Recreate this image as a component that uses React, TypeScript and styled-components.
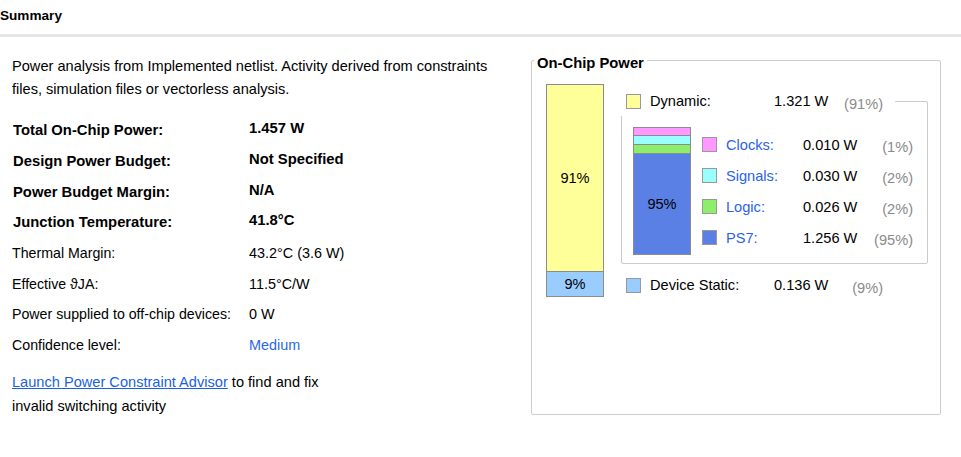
import React from "react";
import styled, { createGlobalStyle } from "styled-components";

const GlobalStyle = createGlobalStyle`
  html, body { margin: 0; padding: 0; background: #ffffff; }
  body {
    font-family: "Liberation Sans", Arial, sans-serif;
    font-size: 14.6px;
    color: #000000;
  }
  * { box-sizing: border-box; }
`;

const Page = styled.div`
  width: 961px;
  height: 457px;
  background: #fff;
`;

const Header = styled.div`
  height: 37px;
  padding-bottom: 4px;
  border-bottom: 3px solid #e6e6e6;
  display: flex;
  align-items: center;
  font-weight: bold;
  font-size: 13.6px;
`;

const Main = styled.div`
  display: flex;
  align-items: flex-start;
`;

const LeftColumn = styled.div`
  width: 531px;
  padding: 18px 0 0 12px;
  display: flex;
  flex-direction: column;
`;

const Intro = styled.p`
  margin: 0;
  line-height: 23px;
  width: 482px;
`;

const SummaryGrid = styled.div`
  margin-top: 14px;
  display: grid;
  grid-template-columns: 237px auto;
  grid-auto-rows: 30.7px;
`;

const Label = styled.div<{ $strong?: boolean }>`
  display: flex;
  align-items: center;
  font-weight: ${(p) => (p.$strong ? "bold" : "normal")};
  font-size: ${(p) => (p.$strong ? "14.8px" : "14.2px")};
  padding-left: ${(p) => (p.$strong ? "1px" : "0")};
  white-space: nowrap;
`;

const Value = styled.div<{ $strong?: boolean; $accent?: boolean }>`
  display: flex;
  align-items: center;
  font-weight: ${(p) => (p.$strong ? "bold" : "normal")};
  font-size: ${(p) => (p.$strong ? "14.8px" : "14.4px")};
  padding-bottom: ${(p) => (p.$strong ? "4px" : "0")};
  color: ${(p) => (p.$accent ? "#2b67ee" : "#000")};
  white-space: nowrap;
`;

const AdvisorNote = styled.p`
  margin: 9px 0 0;
  width: 330px;
  line-height: 24px;
`;

const AdvisorLink = styled.a`
  color: #1b5fe3;
  text-decoration: underline;
  cursor: pointer;
`;

const Panel = styled.div`
  margin-top: 23px;
  width: 410px;
  height: 355px;
  border: 1px solid #cdcdcd;
  border-radius: 2px;
  display: flex;
  flex-direction: column;
`;

const PanelTitle = styled.div`
  margin: -6px 0 0 2px;
  padding: 0 3px;
  width: fit-content;
  background: #fff;
  font-weight: bold;
  font-size: 14.8px;
  line-height: 17px;
`;

const ChartArea = styled.div`
  margin: 12px 0 0 14px;
  display: flex;
  align-items: flex-start;
  gap: 17px;
`;

const Bar = styled.div<{ $width: number }>`
  width: ${(p) => p.$width}px;
  border: 1px solid #8c8c8c;
  display: flex;
  flex-direction: column;
`;

const Segment = styled.div<{ $color: string; $h: number }>`
  height: ${(p) => p.$h}px;
  background: ${(p) => p.$color};
  display: flex;
  align-items: center;
  justify-content: center;
  & + & {
    border-top: 1px solid #8c8c8c;
    box-sizing: content-box;
  }
`;

const Breakdown = styled.div`
  margin-top: 2px;
  display: flex;
  flex-direction: column;
`;

const LegendRow = styled.div<{ $cols: string; $overlap?: boolean }>`
  position: relative;
  z-index: 1;
  width: max-content;
  height: 30px;
  padding: 0 12px 0 5px;
  background: #fff;
  display: grid;
  grid-template-columns: ${(p) => p.$cols};
  align-items: center;
  margin-bottom: ${(p) => (p.$overlap ? "-15px" : "0")};
`;

const Swatch = styled.span<{ $color: string }>`
  width: 15px;
  height: 15px;
  border: 1px solid #999999;
  background: ${(p) => p.$color};
  margin-right: 9px;
`;

const Name = styled.span<{ $link?: boolean }>`
  color: ${(p) => (p.$link ? "#2a62ec" : "#000")};
  white-space: nowrap;
`;

const Amount = styled.span`
  white-space: nowrap;
`;

const Share = styled.span`
  color: #8a8a8a;
  text-align: right;
  padding-top: 5px;
  white-space: nowrap;
`;

const DynamicBox = styled.div`
  width: 307px;
  height: 163px;
  border: 1px solid #cbcbcb;
  border-radius: 2px;
  padding: 25px 0 0 11px;
  display: flex;
  align-items: flex-start;
  gap: 11px;
`;

const RowStack = styled.div`
  margin-top: 2px;
  display: flex;
  flex-direction: column;
`;

const InnerRow = styled.div`
  height: 31px;
  display: grid;
  grid-template-columns: 24px 77px 60px 50px;
  align-items: center;
`;

const StaticRow = styled(LegendRow)`
  margin-top: 6px;
`;

const summaryRows = [
  { label: "Total On-Chip Power:", value: "1.457 W", strong: true },
  { label: "Design Power Budget:", value: "Not Specified", strong: true },
  { label: "Power Budget Margin:", value: "N/A", strong: true },
  { label: "Junction Temperature:", value: "41.8°C", strong: true },
  { label: "Thermal Margin:", value: "43.2°C (3.6 W)" },
  { label: "Effective ϑJA:", value: "11.5°C/W" },
  { label: "Power supplied to off-chip devices:", value: "0 W" },
  { label: "Confidence level:", value: "Medium", accent: true },
];

const dynamicParts = [
  { name: "Clocks", value: "0.010 W", pct: "(1%)", color: "#ff99ff", h: 7 },
  { name: "Signals", value: "0.030 W", pct: "(2%)", color: "#99ffff", h: 8 },
  { name: "Logic", value: "0.026 W", pct: "(2%)", color: "#8cee6a", h: 8 },
  { name: "PS7", value: "1.256 W", pct: "(95%)", color: "#5a80e6", h: 100 },
];

const topCols = "24px 124px 60px 49px";

export default function App() {
  return (
    <Page>
      <GlobalStyle />
      <Header>Summary</Header>
      <Main>
        <LeftColumn>
          <Intro>
            Power analysis from Implemented netlist. Activity derived from
            constraints files, simulation files or vectorless analysis.
          </Intro>
          <SummaryGrid>
            {summaryRows.map((r) => (
              <React.Fragment key={r.label}>
                <Label $strong={r.strong}>{r.label}</Label>
                <Value $strong={r.strong} $accent={r.accent}>
                  {r.value}
                </Value>
              </React.Fragment>
            ))}
          </SummaryGrid>
          <AdvisorNote>
            <AdvisorLink>Launch Power Constraint Advisor</AdvisorLink> to find
            and fix invalid switching activity
          </AdvisorNote>
        </LeftColumn>

        <Panel>
          <PanelTitle>On-Chip Power</PanelTitle>
          <ChartArea>
            <Bar $width={58}>
              <Segment $color="#ffff99" $h={186}>91%</Segment>
              <Segment $color="#99ccff" $h={24}>9%</Segment>
            </Bar>
            <Breakdown>
              <LegendRow $cols={topCols} $overlap>
                <Swatch $color="#ffff99" />
                <Name>Dynamic:</Name>
                <Amount>1.321 W</Amount>
                <Share>(91%)</Share>
              </LegendRow>
              <DynamicBox>
                <Bar $width={58}>
                  {dynamicParts.map((p) => (
                    <Segment key={p.name} $color={p.color} $h={p.h}>
                      {p.name === "PS7" ? "95%" : null}
                    </Segment>
                  ))}
                </Bar>
                <RowStack>
                  {dynamicParts.map((p) => (
                    <InnerRow key={p.name}>
                      <Swatch $color={p.color} />
                      <Name $link>{p.name}:</Name>
                      <Amount>{p.value}</Amount>
                      <Share>{p.pct}</Share>
                    </InnerRow>
                  ))}
                </RowStack>
              </DynamicBox>
              <StaticRow $cols={topCols}>
                <Swatch $color="#99ccff" />
                <Name>Device Static:</Name>
                <Amount>0.136 W</Amount>
                <Share>(9%)</Share>
              </StaticRow>
            </Breakdown>
          </ChartArea>
        </Panel>
      </Main>
    </Page>
  );
}
